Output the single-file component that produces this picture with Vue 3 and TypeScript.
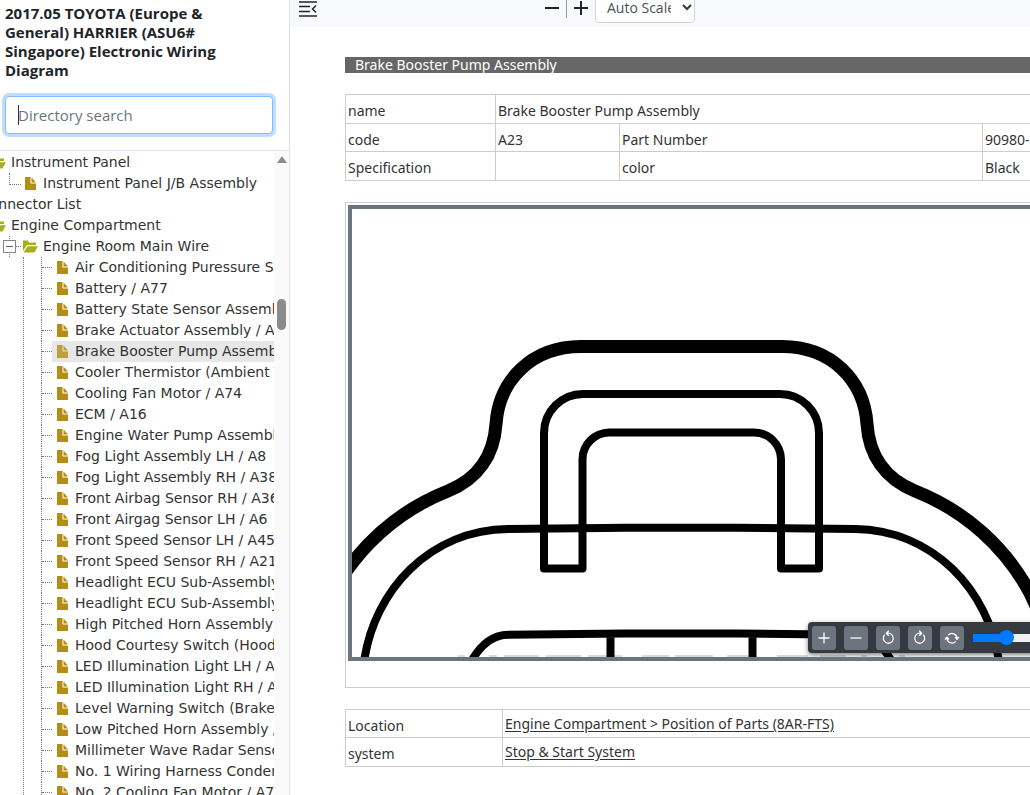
<script setup lang="ts">
import { ref } from 'vue'

interface Leaf { label: string; active?: boolean }

const query = ref('')
const zoom = ref(30)

const leaves: Leaf[] = [
  { label: 'Air Conditioning Puressure Sensor / A73' },
  { label: 'Battery / A77' },
  { label: 'Battery State Sensor Assembly / A78' },
  { label: 'Brake Actuator Assembly / A24' },
  { label: 'Brake Booster Pump Assembly / A23', active: true },
  { label: 'Cooler Thermistor (Ambient Temp. Sensor)' },
  { label: 'Cooling Fan Motor / A74' },
  { label: 'ECM / A16' },
  { label: 'Engine Water Pump Assembly / A15' },
  { label: 'Fog Light Assembly LH / A8' },
  { label: 'Fog Light Assembly RH / A38' },
  { label: 'Front Airbag Sensor RH / A36' },
  { label: 'Front Airgag Sensor LH / A6' },
  { label: 'Front Speed Sensor LH / A45' },
  { label: 'Front Speed Sensor RH / A21' },
  { label: 'Headlight ECU Sub-Assembly LH' },
  { label: 'Headlight ECU Sub-Assembly RH' },
  { label: 'High Pitched Horn Assembly / A9' },
  { label: 'Hood Courtesy Switch (Hood Lock)' },
  { label: 'LED Illumination Light LH / A5' },
  { label: 'LED Illumination Light RH / A35' },
  { label: 'Level Warning Switch (Brake Fluid)' },
  { label: 'Low Pitched Horn Assembly / A10' },
  { label: 'Millimeter Wave Radar Sensor' },
  { label: 'No. 1 Wiring Harness Condenser' },
  { label: 'No. 2 Cooling Fan Motor / A75' },
]
</script>

<template>
  <div class="app">
    <aside class="sidebar">
      <h1 class="title">2017.05 TOYOTA (Europe &amp; General) HARRIER (ASU6# Singapore) Electronic Wiring Diagram</h1>
      <div class="search">
        <input v-model="query" type="text" placeholder="Directory search" aria-label="Directory search">
        <span class="caret"></span>
      </div>
      <div class="tree-pane">
        <nav class="tree" aria-label="Directory">
          <div class="row top">
            <svg class="icon folder" viewBox="0 0 15 13"><path d="M0 11V0.500h5l1 2h7V5H4z" /><path d="M4.500 6.200H15l-3.500 6.300H0.500z" /></svg>
            <span>Instrument Panel</span>
          </div>
          <div class="row second last">
            <svg class="icon doc" viewBox="0 0 12 13"><path d="M0 0h5.500v6.500H11V13H0z" /><path d="M6.500 0.500l4.500 5H6.500z" /></svg>
            <span>Instrument Panel J/B Assembly</span>
          </div>
          <div class="row cut"><span>Connector List</span></div>
          <div class="row top">
            <svg class="icon folder" viewBox="0 0 15 13"><path d="M0 11V0.500h5l1 2h7V5H4z" /><path d="M4.500 6.200H15l-3.500 6.300H0.500z" /></svg>
            <span>Engine Compartment</span>
          </div>
          <div class="row second open">
            <button class="toggle" type="button" aria-label="Collapse"></button>
            <svg class="icon folder" viewBox="0 0 15 13"><path d="M0 11V0.500h5l1 2h7V5H4z" /><path d="M4.500 6.200H15l-3.500 6.300H0.500z" /></svg>
            <span>Engine Room Main Wire</span>
          </div>
          <div class="branch">
            <div v-for="leaf in leaves" :key="leaf.label" class="row leaf">
              <span class="twig"></span>
              <span class="node" :class="{ active: leaf.active }">
                <svg class="icon doc" viewBox="0 0 12 13"><path d="M0 0h5.500v6.500H11V13H0z" /><path d="M6.500 0.500l4.500 5H6.500z" /></svg>
                <span>{{ leaf.label }}</span>
              </span>
            </div>
          </div>
        </nav>
        <div class="scrollbar"><span class="up"></span><span class="thumb"></span></div>
      </div>
    </aside>

    <main class="main">
      <header class="toolbar">
        <button class="tool menu" type="button" aria-label="Toggle sidebar">
          <svg width="18" height="16" viewBox="0 0 18 16"><path d="M0 1h18M0 5.500h11M0 10.500h11M0 15h18M17 4.500l-3.500 3.500L17 11.500" /></svg>
        </button>
        <div class="zoomers">
          <button class="tool" type="button" aria-label="Zoom out"><svg width="16" height="16" viewBox="0 0 16 16"><path d="M1 8h14" /></svg></button>
          <span class="sep"></span>
          <button class="tool" type="button" aria-label="Zoom in"><svg width="16" height="16" viewBox="0 0 16 16"><path d="M1 8h14M8 1v14" /></svg></button>
          <div class="scale">
            <select aria-label="Scale"><option>Auto Scale</option></select>
            <svg width="10" height="7" viewBox="0 0 10 7"><path d="M1 1l4 4 4-4" /></svg>
          </div>
        </div>
      </header>

      <div class="content">
        <h2 class="heading">Brake Booster Pump Assembly</h2>
        <table class="info">
          <colgroup><col class="c1"><col class="c2"><col class="c3"><col></colgroup>
          <tbody>
            <tr><td>name</td><td colspan="3">Brake Booster Pump Assembly</td></tr>
            <tr class="short"><td>code</td><td>A23</td><td>Part Number</td><td>90980-12A23</td></tr>
            <tr><td>Specification</td><td></td><td>color</td><td>Black</td></tr>
          </tbody>
        </table>

        <section class="figure">
          <div class="frame">
            <svg class="drawing" width="1000" height="448" viewBox="352 209 1000 448">
              <path class="mark" d="M458 656.500h7M489 656.500h8M504 656.500h35M546 656.500h35M588 656.500h34M642 656.500h27M675 656.500h38M727 656.500h21M777 656.500h31M820 656.500h26M861 656.500h6M899 656.500h6" />
              <path class="thick" d="M333 593C357 548 397 511 448 491C478 479 494 455 496 424C499 380 532 346.500 581 346.500H782C831 346.500 864 380 867 424C869 455 885 479 915 491C966 511 1006 548 1030 593L1036 606" />
              <path d="M583 394H780A39 39 0 0 1 819 433V568.500H781V459A27 27 0 0 0 754 432.500H609A27 27 0 0 0 582.500 459V568.500H544V433A39 39 0 0 1 583 394Z" />
              <path d="M364 662C374 590 430 530 508 529L625 527.700H738L855 529C933 530 989 590 999 662" />
              <path d="M472 660C482 643 494 635 508 634.700L625 633.500H738L855 634.700C869 635 881 643 891 660M610.500 633V660M752.500 633V660" />
            </svg>
            <div class="viewer-bar">
              <button type="button" aria-label="Enlarge"><svg viewBox="0 0 24 24"><path d="M6.500 12h11M12 6.500v11" /></svg></button>
              <button type="button" aria-label="Reduce"><svg viewBox="0 0 24 24"><path d="M6.500 12h11" /></svg></button>
              <button type="button" aria-label="Rotate left"><svg viewBox="0 0 24 24"><path d="M8.600 8.800A5 5 0 1 0 12.500 7.200h-2M12.800 4.800L10.300 7.200l2.500 2.500" /></svg></button>
              <button type="button" aria-label="Rotate right"><svg viewBox="0 0 24 24"><path d="M15.400 8.800A5 5 0 1 1 11.500 7.200h2M11.200 4.800l2.500 2.400-2.500 2.500" /></svg></button>
              <button type="button" aria-label="Reset"><svg viewBox="0 0 24 24"><path d="M8.200 9.200a5 5 0 0 1 8.800 3.300M15.800 15.300A5 5 0 0 1 7 12M5 13.500l2-2.300 2 2.300M15 11l2 2.300 2-2.300" /></svg></button>
              <input v-model="zoom" type="range" min="0" max="100" aria-label="Zoom level">
            </div>
          </div>
        </section>

        <table class="links">
          <colgroup><col class="l1"><col></colgroup>
          <tbody>
            <tr class="short"><td>Location</td><td><a href="#location">Engine Compartment &gt; Position of Parts (8AR-FTS)</a></td></tr>
            <tr><td>system</td><td><a href="#system">Stop &amp; Start System</a></td></tr>
          </tbody>
        </table>
      </div>
    </main>
  </div>
</template>

<style>
body { margin: 0; overflow: hidden; background: #fff; }
</style>

<style scoped>
* { box-sizing: border-box; }
.app { display: flex; height: 100vh; overflow: hidden; font-family: "Noto Sans", "Open Sans", sans-serif; color: #333; }

.sidebar { flex: 0 0 290px; min-width: 0; display: flex; flex-direction: column; border-right: 1px solid #dee2e6; }
.title { margin: 4px 30px 16px 5px; font-family: "Open Sans", sans-serif; font-size: 15px; line-height: 19px; font-weight: 700; color: #212529; }
.search { position: relative; margin: 0 16px 16px 5px; }
.search input { display: block; width: 100%; height: 38px; padding: 0 12px; border: 1px solid #80bdff; border-radius: 4px; box-shadow: 0 0 0 3px rgba(0, 123, 255, 0.25); outline: none; font: 15px "Open Sans", sans-serif; color: #495057; background: #fff; }
.search input::placeholder { color: #6c757d; opacity: 1; }
.caret { position: absolute; left: 13px; top: 9px; width: 1px; height: 20px; background: #333; }

.tree-pane { flex: 1; min-height: 0; display: flex; border-top: 1px solid #dee2e6; }
.tree { flex: 1; min-width: 0; overflow: hidden; padding-top: 1px; font-family: Verdana, "DejaVu Sans", sans-serif; font-size: 14px; line-height: 21px; white-space: nowrap; }
.row { display: flex; align-items: center; height: 21px; }
.icon { flex: none; display: block; }
.folder { width: 15px; height: 13px; fill: #a5b01a; }
.doc { width: 12px; height: 13px; fill: #b58d15; }
.top .folder { margin-left: -9px; margin-right: 5px; }
.cut span { margin-left: -20px; }
.second { position: relative; padding-left: 23px; }
.second .folder { margin-right: 5px; }
.last { padding-left: 25px; }
.last .doc { margin-right: 6px; }
.last::before { content: ""; position: absolute; left: 9px; top: 0; width: 11px; height: 11px; border: dotted #777; border-width: 0 0 1px 1px; }
.open::before { content: ""; position: absolute; left: 9px; top: 0; height: 21px; border-left: 1px dotted #777; }
.open::after { content: ""; position: absolute; left: 16px; top: 10px; width: 5px; border-top: 1px dotted #777; }
.toggle { position: absolute; z-index: 1; left: 3px; top: 4px; width: 13px; height: 13px; padding: 0; border: 1px solid #848484; background: linear-gradient(#666, #666) center / 7px 1px no-repeat #fff; }
.branch { margin-left: 23px; padding-left: 17px; border-left: 1px dotted #777; }
.leaf { border-left: 1px dotted #777; }
.twig { flex: 0 0 10px; border-top: 1px dotted #777; }
.node { flex: 1 0 auto; display: flex; align-items: center; gap: 6px; height: 21px; padding-left: 5px; }
.node.active { background: #e7e7e7; }
.active .icon { opacity: 0.8; }
.scrollbar { flex: 0 0 15px; position: relative; background: #fafafa; }
.up { position: absolute; left: 3px; top: 5px; border: solid transparent; border-width: 0 5px 7px; border-bottom-color: #8b8b8b; }
.thumb { position: absolute; left: 3px; top: 148px; width: 9px; height: 31px; border-radius: 5px; background: #8b8b8b; }

.main { flex: 1; min-width: 0; overflow: hidden; }
.toolbar { display: flex; align-items: flex-start; height: 27px; background: #f8f9fc; }
.tool { display: block; padding: 0; border: 0; background: none; }
.tool svg { display: block; fill: none; stroke: #212529; stroke-width: 2; }
.tool.menu { margin: 1px 0 0 9px; }
.tool.menu svg { stroke-width: 1.500; }
.zoomers { display: flex; align-items: flex-start; margin-left: 227px; }
.zoomers .tool { flex: none; }
.sep { width: 1px; height: 18px; margin: 0 6px; background: #999; }
.scale { position: relative; width: 100px; margin-left: 6px; margin-top: -8px; }
.scale select { appearance: none; display: block; width: 100px; height: 31px; padding: 0 23px 0 11px; border: 1px solid #ced4da; border-radius: 4px; background: #fff; color: #495057; font: 14px "Open Sans", sans-serif; }
.scale svg { position: absolute; right: 3px; top: 12px; fill: none; stroke: #343a40; stroke-width: 2; }

.content { margin: 30px 0 0 55px; min-width: 820px; font-size: 14px; line-height: 20px; }
.heading { margin: 0 0 21px; height: 16px; padding-left: 10px; background: #666; color: #fff; font-size: 14px; line-height: 16px; font-weight: 400; }
table { width: 100%; border-collapse: collapse; table-layout: fixed; }
td { height: 29px; padding: 4px 2px 0; border: 1px solid #ccc; vertical-align: middle; white-space: nowrap; }
.short td { height: 28px; }
.c1 { width: 150px; }
.c2 { width: 124px; }
.c3 { width: 363px; }
.l1 { width: 157px; }
.links td + td { padding-top: 0; }
.links a { color: #333; text-decoration: underline; text-underline-offset: 2px; }
.figure { margin: 21px 0; padding: 2px 2px 26px; border: 1px solid #ccc; }
.frame { position: relative; height: 456px; border: 4px solid #6c757d; overflow: hidden; }
.drawing { display: block; fill: none; stroke: #000; stroke-width: 8; stroke-linejoin: round; }
.drawing .thick { stroke-width: 13; }
.drawing .mark { stroke: #d9d9d9; stroke-width: 3; }
.viewer-bar { position: absolute; left: 456px; bottom: 4px; display: flex; align-items: center; gap: 8px; height: 31px; padding: 0 4px; border-radius: 4px; background: #343a40; box-shadow: 0 2px 5px rgba(0, 0, 0, 0.5); }
.viewer-bar button { flex: none; width: 24px; height: 24px; padding: 0; border: 0; border-radius: 3px; background: #6c757d; }
.viewer-bar svg { display: block; width: 24px; height: 24px; fill: none; stroke: #fff; stroke-width: 1.300; }
.viewer-bar input { appearance: none; width: 100px; height: 16px; margin: 0 0 0 1px; background: linear-gradient(90deg, #007bff 32px, #efefef 32px) center / 100% 8px no-repeat; border-radius: 4px; }
.viewer-bar input::-webkit-slider-thumb { appearance: none; width: 15px; height: 15px; border-radius: 50%; background: #007bff; }
</style>
